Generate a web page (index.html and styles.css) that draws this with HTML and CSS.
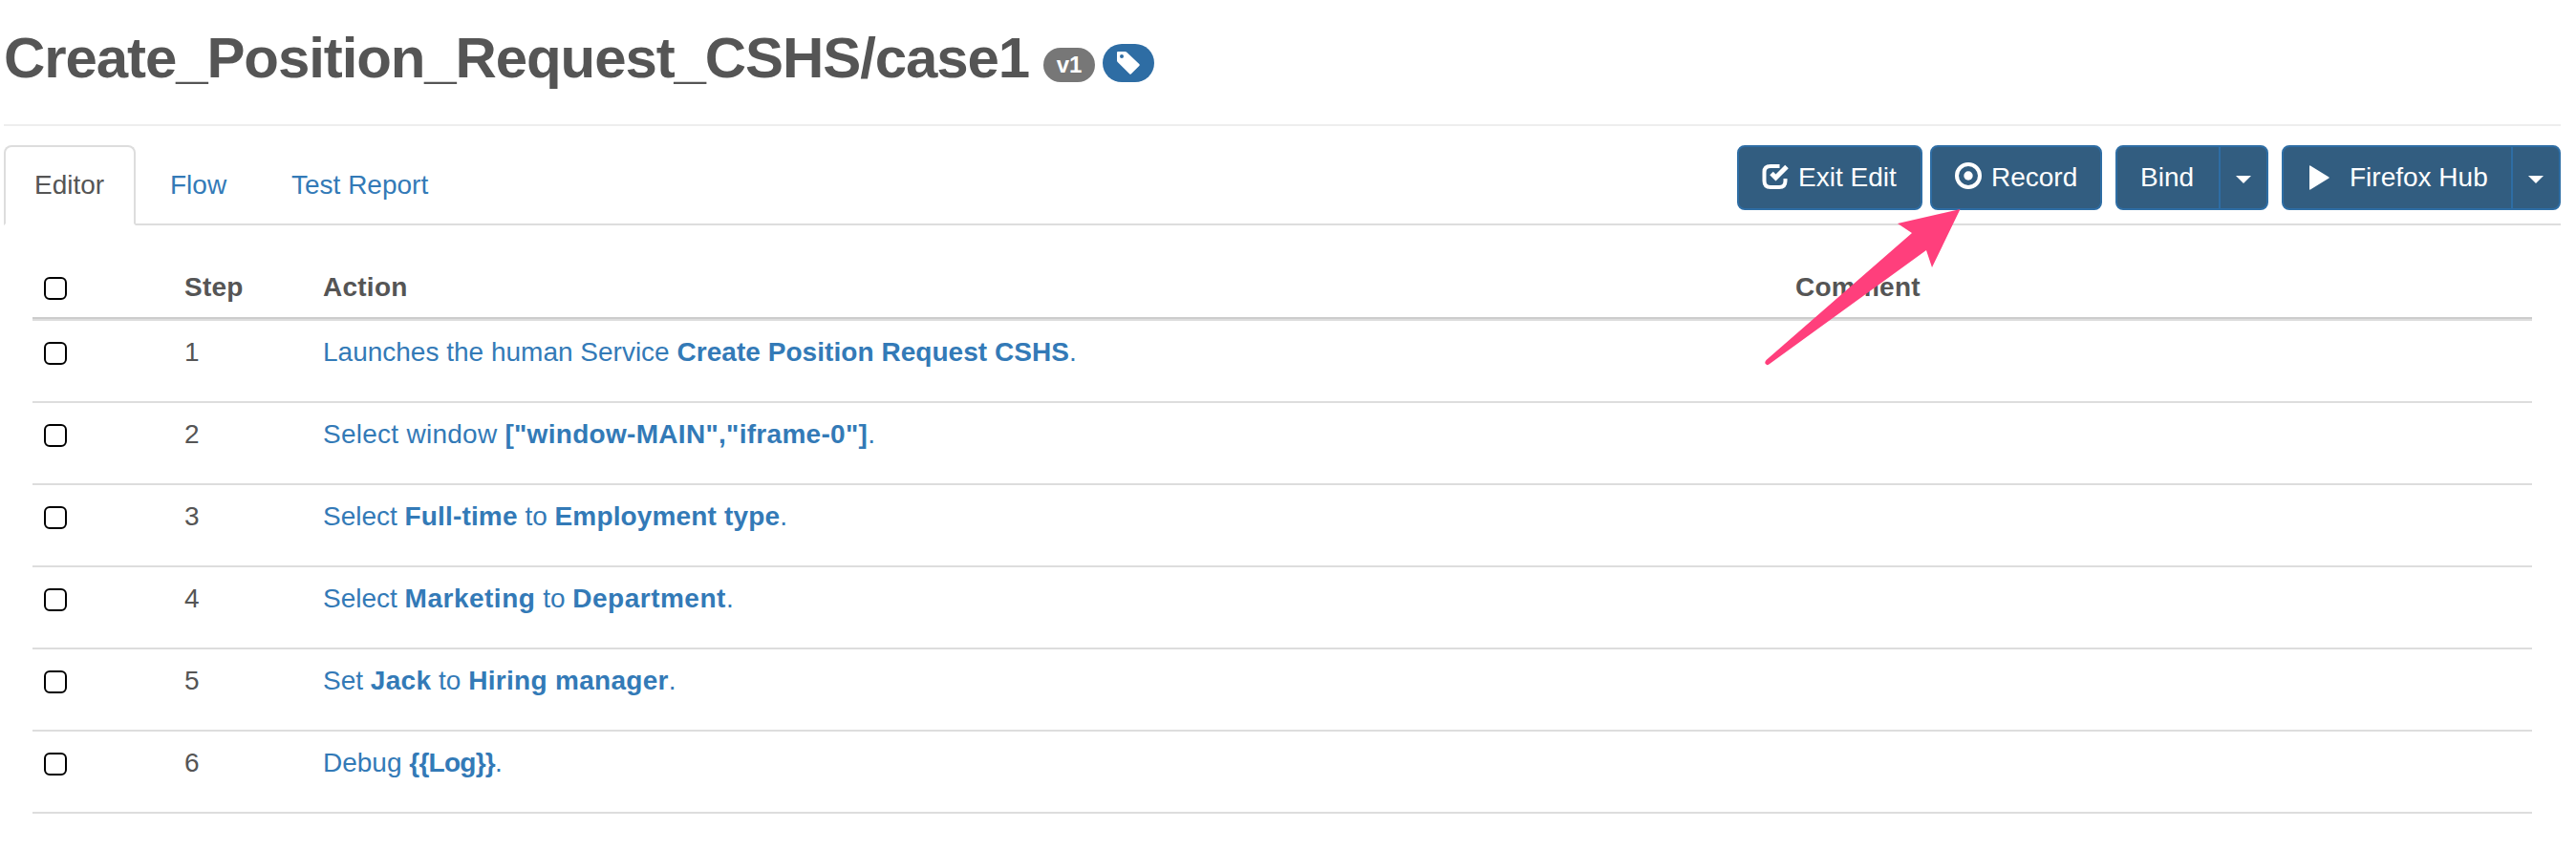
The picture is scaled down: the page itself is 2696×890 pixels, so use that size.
FILE: index.html
```html
<!DOCTYPE html>
<html lang="en">
<head>
<meta charset="utf-8">
<title>Create_Position_Request_CSHS/case1</title>
<link rel="stylesheet" href="styles.css">
</head>
<body>
<header class="page-header">
  <h1 class="title">Create_Position_Request_CSHS/case1</h1>
  <span class="badge badge-version">v1</span>
  <span class="badge badge-tag"><svg class="tag-icon" viewBox="0 0 24 24"><path fill-rule="evenodd" d="M0 1Q0 0 1 0H8.500Q9.500 0 10.300 .7L23.500 13.300Q24 14 23.500 14.700L14.700 23.500Q14 24 13.300 23.500L.7 11Q0 10.300 0 9.500ZM5 3A2 2 0 1 0 5 7A2 2 0 1 0 5 3Z"/></svg></span>
</header>
<div class="toolbar">
  <nav class="tabs">
    <a class="tab tab-active">Editor</a>
    <a class="tab tab-flow">Flow</a>
    <a class="tab tab-report">Test Report</a>
  </nav>
  <div class="actions">
    <button class="btn btn-exit"><svg class="icon" viewBox="0 0 28 28"><path class="line" d="M18.500 3H9Q2.500 3 2.500 9V18.500Q2.500 25 9 25H18Q24.500 25 24.500 18.500V16"/><path class="tick" d="M10 10.500L14.500 15L26 3.500"/></svg><span>Exit Edit</span></button>
    <button class="btn btn-record"><svg class="icon icon-record" viewBox="0 0 28 28"><circle class="ring" cx="14" cy="14" r="12"/><circle cx="14" cy="14" r="4.700"/></svg><span>Record</span></button>
    <div class="group">
      <button class="btn btn-bind"><span>Bind</span></button>
      <button class="btn btn-caret"><i class="caret"></i></button>
    </div>
    <div class="group">
      <button class="btn btn-hub"><svg class="play" viewBox="0 0 21 26"><path d="M0 1Q0 0 1 .4L20.500 12.500Q21 13 20.500 13.500L1 25.600Q0 26 0 25Z"/></svg><span>Firefox Hub</span></button>
      <button class="btn btn-caret"><i class="caret"></i></button>
    </div>
  </div>
</div>
<main class="steps">
  <div class="row head"><input class="check" type="checkbox"><b>Step</b><b class="col-action">Action</b><b>Comment</b></div>
  <div class="row"><input class="check" type="checkbox"><span>1</span><a class="link link-launch">Launches the human Service <b>Create Position Request CSHS</b>.</a></div>
  <div class="row"><input class="check" type="checkbox"><span>2</span><a class="link link-window">Select window <b>["window-MAIN","iframe-0"]</b>.</a></div>
  <div class="row"><input class="check" type="checkbox"><span>3</span><a class="link link-type">Select <b>Full-time</b> to <b>Employment type</b>.</a></div>
  <div class="row"><input class="check" type="checkbox"><span>4</span><a class="link link-department">Select <b>Marketing</b> to <b>Department</b>.</a></div>
  <div class="row"><input class="check" type="checkbox"><span>5</span><a class="link link-manager">Set <b>Jack</b> to <b>Hiring manager</b>.</a></div>
  <div class="row"><input class="check" type="checkbox"><span>6</span><a class="link link-debug">Debug <b>{{Log}}</b>.</a></div>
</main>
<svg class="pointer" viewBox="0 0 206 164"><path d="M204.500 0L139 15L154 25L1.500 158Q-1 161 1.500 162.500Q3 164 5 162L169 43L175 61Z"/></svg>
</body>
</html>
```
FILE: styles.css
```css
* { box-sizing: border-box; }
body {
  position: relative;
  margin: 0;
  padding: 0 16px 0 4px;
  height: 890px;
  overflow: hidden;
  background: #fff;
  color: #555;
  font: 28px/40px "Liberation Sans", Arial, sans-serif;
}
.page-header {
  display: flex;
  align-items: flex-start;
  height: 132px;
  border-bottom: 2px solid #eee;
}
.title {
  margin: 28px 0 0;
  width: 1088px;
  font-size: 60px;
  line-height: 66px;
  font-weight: bold;
  letter-spacing: -1.1px;
  white-space: nowrap;
}
.badge {
  display: flex;
  justify-content: center;
  align-items: center;
  width: 54px;
  border-radius: 20px;
  color: #fff;
}
.badge-version {
  margin-top: 50px;
  height: 36px;
  background: #777;
  font-size: 24px;
  font-weight: bold;
}
.badge-tag {
  margin: 46px 0 0 8px;
  height: 40px;
  background: #2e6da4;
}
.tag-icon { width: 24px; height: 24px; fill: #fff; }
.toolbar {
  display: flex;
  justify-content: space-between;
  height: 104px;
  padding-top: 20px;
  border-bottom: 2px solid #ddd;
}
.tabs { display: flex; margin-bottom: -2px; }
.tab {
  height: 84px;
  padding: 20px 30px;
  border: 2px solid transparent;
  color: #337ab7;
  white-space: nowrap;
}
.tab-active {
  width: 138px;
  border-color: #ddd;
  border-bottom-color: #fff;
  border-radius: 8px 8px 0 0;
  background: #fff;
  color: #555;
}
.tab-flow { margin-left: 4px; width: 124px; }
.tab-report { margin-left: 3px; }
.actions { display: flex; }
.btn {
  display: flex;
  align-items: center;
  height: 68px;
  padding: 0 0 0 24px;
  border: 2px solid #2e6da4;
  border-radius: 8px;
  background: #325d80;
  color: #fff;
  font: inherit;
  white-space: nowrap;
}
.btn-exit { width: 194px; }
.btn-record { width: 180px; margin-left: 8px; }
.group { display: flex; margin-left: 14px; }
.btn-bind { width: 110px; border-radius: 8px 0 0 8px; }
.btn-hub { width: 242px; padding-left: 27px; border-radius: 8px 0 0 8px; }
.btn-caret {
  width: 52px;
  margin-left: -2px;
  padding: 4px 0 0;
  justify-content: center;
  border-radius: 0 8px 8px 0;
}
.caret {
  border: 8px solid transparent;
  border-top-color: #fff;
  border-bottom: 0;
}
.icon { width: 28px; height: 28px; margin: 0 10px 2px 0; fill: #fff; }
.icon-record { margin-bottom: 4px; }
.line, .tick, .ring { fill: none; stroke: #fff; stroke-width: 4; }
.tick { stroke-width: 5; }
.play { width: 21px; height: 26px; margin: 0 21px 1px 0; fill: #fff; }
.steps { margin: 30px 30px 0; }
.row {
  display: grid;
  grid-template-columns: 159px 145px 1541px 1fr;
  align-items: start;
  height: 86px;
  padding-top: 13px;
  border-bottom: 2px solid #ddd;
}
.row.head {
  height: 70px;
  padding-top: 15px;
  box-shadow: inset 0 -2px #ccc;
  letter-spacing: 0.25px;
}
.check {
  appearance: none;
  width: 24px;
  height: 24px;
  margin: 9px 0 0 12px;
  border: 2px solid #000;
  border-radius: 6px;
  background: #fff;
}
.link { color: #337ab7; white-space: nowrap; }
.link-launch b { letter-spacing: 0.05px; }
.link-window { letter-spacing: 0.26px; }
.link-window b { letter-spacing: 0.3px; }
.link-type b { letter-spacing: 0.15px; }
.link-department b { letter-spacing: 0.5px; }
.link-manager b { letter-spacing: 0.3px; }
.link-debug b { letter-spacing: -0.75px; }
.pointer {
  position: absolute;
  left: 1847px;
  top: 219px;
  width: 206px;
  height: 164px;
  fill: #ff3f7c;
}
```
